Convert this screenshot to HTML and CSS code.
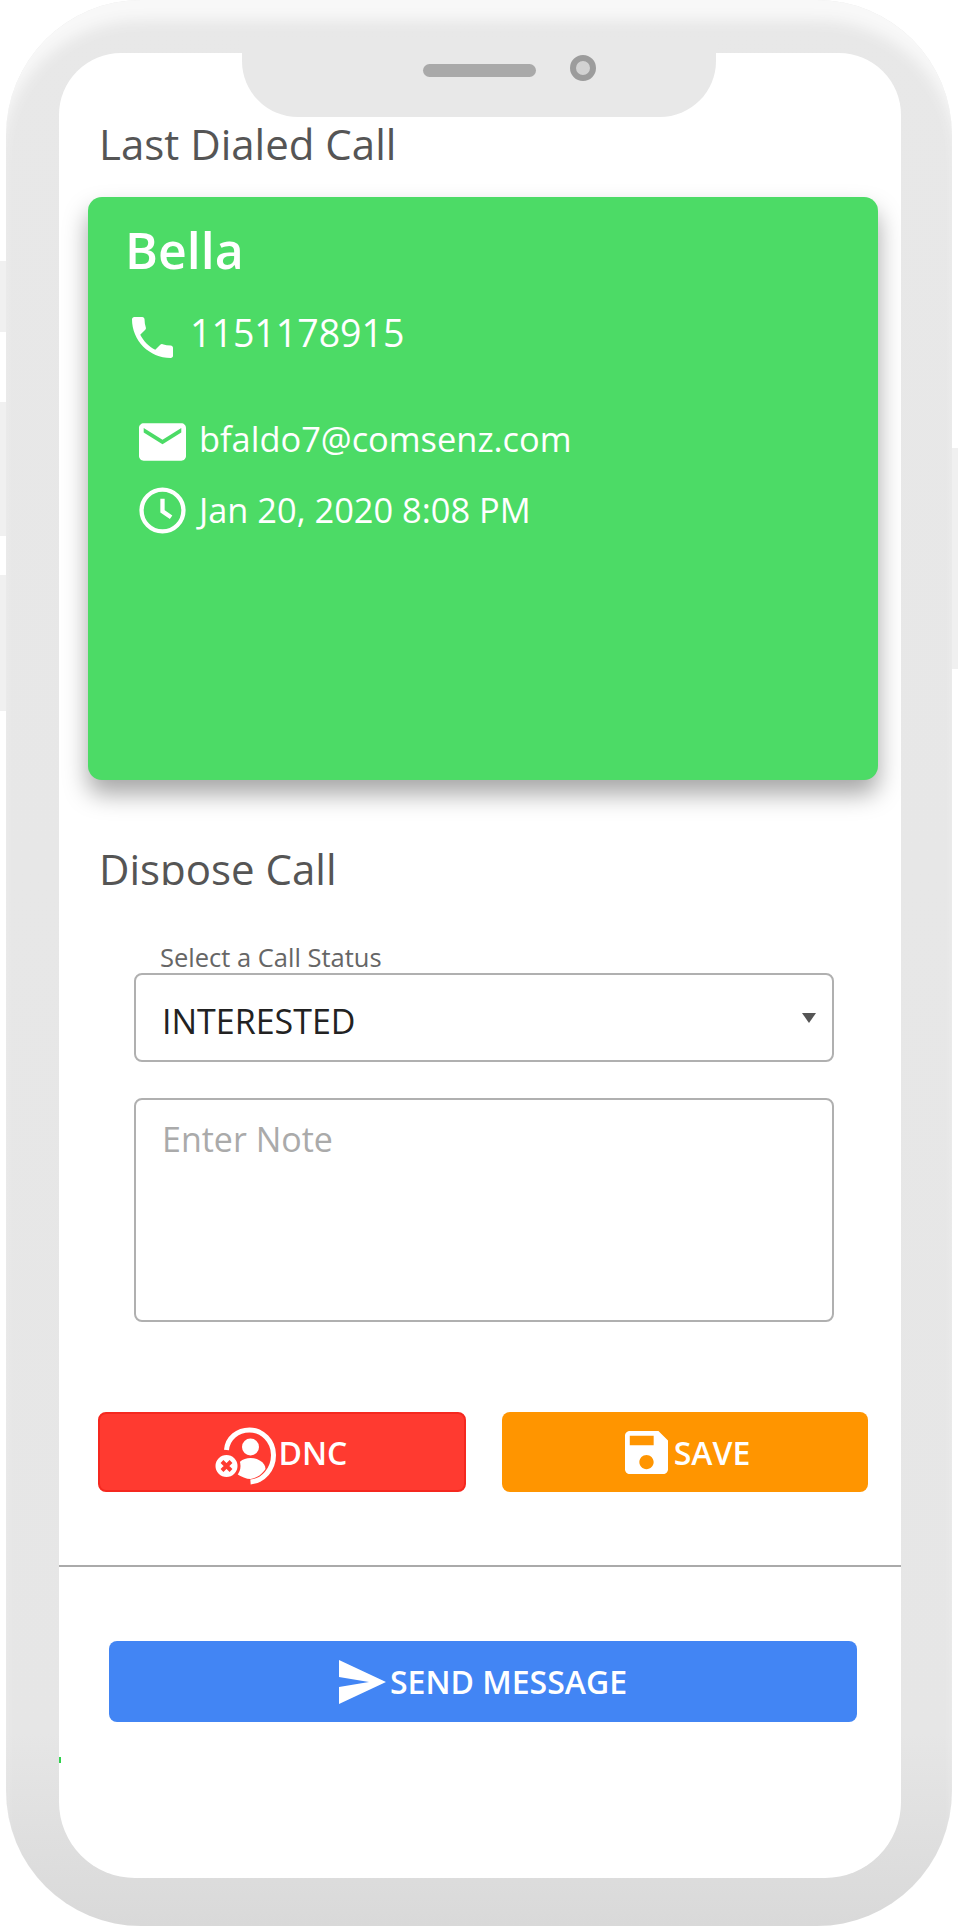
FILE: index.html
```html
<!DOCTYPE html>
<html>
<head>
    <title>Last Dialed Call</title>
    <link rel="stylesheet" href="styles.css">
</head>
<body>
    <div class="phone">
        <span class="side-key key-one"></span>
        <span class="side-key key-two"></span>
        <span class="side-key key-three"></span>
        <span class="side-key key-right"></span>

        <div class="notch">
            <span class="speaker"></span>
            <span class="camera"></span>
        </div>

        <span class="screen-speck"></span>

        <div class="screen">
            <h2 class="section-title">Last Dialed Call</h2>

            <div class="call-card">
                <h3 class="lead-name">Bella</h3>
                <div class="lead-phone">
                    <svg class="icon-phone" viewBox="3 3 18 18"><path d="M6.62 10.79c1.44 2.83 3.76 5.14 6.59 6.59l2.2-2.2c.27-.27.67-.36 1.02-.24 1.12.37 2.33.57 3.57.57.55 0 1 .45 1 1V20c0 .55-.45 1-1 1-9.39 0-17-7.61-17-17 0-.55.45-1 1-1h3.5c.55 0 1 .45 1 1 0 1.25.2 2.45.57 3.57.11.35.03.74-.25 1.02l-2.2 2.2z"/></svg>
                    <span>1151178915</span>
                </div>
                <div class="lead-line lead-email">
                    <svg class="icon-mail" viewBox="2 4 20 16"><path d="M20 4H4c-1.1 0-2 .9-2 2v12c0 1.1.9 2 2 2h16c1.1 0 2-.9 2-2V6c0-1.1-.9-2-2-2zm0 4l-8 5-8-5V6l8 5 8-5v2z"/></svg>
                    <span>bfaldo7@comsenz.com</span>
                </div>
                <div class="lead-line lead-date">
                    <svg class="icon-clock" viewBox="0 0 24 24"><circle cx="12" cy="12" r="10.7"/><path d="M12 6v6.4l4.4 3"/></svg>
                    <span>Jan 20, 2020 8:08 PM</span>
                </div>
            </div>

            <h2 class="section-title dispose-title">Dispose Call</h2>

            <form class="dispose-form">
                <label class="status-label" for="status">Select a Call Status</label>
                <div class="select-wrap">
                    <select id="status" class="status-select">
                        <option>INTERESTED</option>
                    </select>
                </div>
                <textarea class="note-box" placeholder="Enter Note"></textarea>
            </form>

            <div class="action-row">
                <button class="btn btn-dnc">
                    <svg class="icon-dnc" viewBox="0 0 64 58">
                        <path class="dnc-ring" d="M14 23C15 11 25 3 37 3c13 0 24 11 24 25S51 54 38 55"/>
                        <circle cx="38" cy="20" r="8.5"/>
                        <path d="M23 46c0-10 7-15 15-15s15 5 15 11c-4 6-9 9-15 10-4 0-9-2-15-6z"/>
                        <circle class="dnc-badge" cx="14" cy="39" r="12.5"/>
                        <path class="dnc-x" d="M9.5 34.5l9 9m0-9l-9 9"/>
                    </svg>
                    <span>DNC</span>
                </button>
                <button class="btn btn-save">
                    <svg class="icon-save" viewBox="3 3 18 18"><path d="M17 3H5c-1.11 0-2 .9-2 2v14c0 1.1.89 2 2 2h14c1.1 0 2-.9 2-2V7l-4-4zm-5 16c-1.66 0-3-1.34-3-3s1.34-3 3-3 3 1.34 3 3-1.34 3-3 3zm3-10H5V5h10v4z"/></svg>
                    <span>SAVE</span>
                </button>
            </div>

            <hr class="divider">

            <button class="btn btn-send">
                <svg class="icon-send" viewBox="0 0 47 44"><path d="M0 0L47 22 0 44V27L30 22 0 17z"/></svg>
                <span>SEND MESSAGE</span>
            </button>
        </div>
    </div>
</body>
</html>
```

FILE: styles.css
```css
* {
    box-sizing: border-box;
}

body {
    margin: 0;
    background-color: white;
    font-family: "Open Sans", "Noto Sans", sans-serif;
}

.phone {
    position: relative;
    width: 946px;
    height: 1926px;
    margin-left: 6px;
    padding: 53px 51px 48px 53px;
    border-radius: 135px;
    background: linear-gradient(#e8e8e8, #e6e6e6 90%, #d9d9d9);
    box-shadow: inset 0 26px 14px -6px #f8f8f8;
    filter: blur(0.5px);
}

.side-key {
    position: absolute;
    left: -6px;
    width: 6px;
    background-color: #f0f0f0;
}

.key-one {
    top: 261px;
    height: 71px;
}

.key-two {
    top: 402px;
    height: 134px;
}

.key-three {
    top: 575px;
    height: 136px;
}

.key-right {
    top: 448px;
    left: 946px;
    height: 221px;
}

.notch {
    position: absolute;
    top: 40px;
    left: 236px;
    width: 474px;
    height: 77px;
    border-radius: 0 0 56px 56px;
    background-color: #e8e8e8;
}

.speaker {
    position: absolute;
    top: 24px;
    left: 181px;
    width: 113px;
    height: 13px;
    border-radius: 7px;
    background-color: #a9a9a9;
}

.camera {
    position: absolute;
    top: 15px;
    left: 328px;
    width: 26px;
    height: 26px;
    border: 6px solid #9c9c9c;
    border-radius: 50%;
    background-color: #d2d2d2;
}

.screen-speck {
    position: absolute;
    top: 1757px;
    left: 53px;
    width: 2px;
    height: 6px;
    background-color: #2fd24c;
}

.screen {
    height: 100%;
    padding-top: 66px;
    overflow: hidden;
    border-radius: 62px 62px 76px 76px;
    background-color: white;
}

.section-title {
    margin: 0 0 0 40px;
    color: #555;
    font-size: 42px;
    font-weight: 400;
    line-height: 50px;
}

.call-card {
    width: 790px;
    height: 583px;
    margin: 28px 0 0 29px;
    padding: 22px 37px;
    border-radius: 14px;
    background-color: #4cdb66;
    box-shadow: 0 14px 24px rgba(0, 0, 0, 0.35);
    color: white;
}

.lead-name {
    margin: 0;
    font-size: 50px;
    font-weight: 600;
    line-height: 62px;
}

.lead-phone {
    display: flex;
    align-items: center;
    gap: 16px;
    margin-top: 26px;
    font-size: 37.5px;
    line-height: 52px;
}

.icon-phone {
    width: 43px;
    height: 41px;
    margin: 8px 0 0 6px;
    fill: white;
}

.lead-line {
    display: flex;
    align-items: center;
    gap: 13px;
    margin-left: 14px;
    font-size: 34.4px;
    line-height: 44px;
}

.lead-email {
    margin-top: 58px;
}

.lead-date {
    margin-top: 24px;
}

.icon-mail {
    width: 47px;
    height: 38px;
    margin-top: 6px;
    fill: white;
}

.icon-clock {
    width: 47px;
    height: 47px;
    margin-top: 2px;
    fill: none;
    stroke: white;
    stroke-width: 2.2;
}

.dispose-title {
    height: 41px;
    margin-top: 64px;
    overflow: hidden;
}

.dispose-form {
    margin: 61px 0 0 75px;
    width: 700px;
}

.status-label {
    display: block;
    height: 27px;
    margin-left: 26px;
    color: #666;
    font-size: 25.5px;
    line-height: 22px;
}

.select-wrap {
    position: relative;
}

.select-wrap::after {
    content: "";
    position: absolute;
    top: 40px;
    right: 18px;
    border: 7px solid transparent;
    border-top: 10px solid #555;
    border-bottom: none;
}

.status-select {
    display: block;
    width: 100%;
    height: 89px;
    padding: 6px 0 0 26px;
    border: 2px solid #b0b0b0;
    border-radius: 8px;
    appearance: none;
    background-color: white;
    color: #222;
    font-family: inherit;
    font-size: 34px;
}

.note-box {
    display: block;
    width: 100%;
    height: 224px;
    margin-top: 36px;
    padding: 16px 26px;
    border: 2px solid #b0b0b0;
    border-radius: 8px;
    resize: none;
    font-family: inherit;
    font-size: 34px;
}

.note-box::placeholder {
    color: #aaa;
}

.btn {
    display: flex;
    align-items: center;
    justify-content: center;
    border: 2px solid transparent;
    border-radius: 8px;
    color: white;
    font-family: inherit;
    font-size: 32px;
    font-weight: 600;
}

.action-row {
    display: grid;
    grid-template-columns: 368px 366px;
    gap: 36px;
    width: 770px;
    margin: 90px 0 0 39px;
}

.action-row .btn {
    height: 80px;
}

.btn-dnc {
    padding-right: 11px;
    background-color: #ff3a30;
    border-color: #f5281f;
}

.btn-save {
    padding-left: 11px;
    background-color: #ff9500;
}

.btn-dnc svg {
    margin-right: 2px;
}

.icon-dnc {
    width: 65px;
    height: 58px;
    margin-top: 8px;
    fill: white;
}

.dnc-ring {
    fill: none;
    stroke: white;
    stroke-width: 5;
}

.dnc-badge {
    stroke: #ff3a30;
    stroke-width: 3;
}

.dnc-x {
    fill: none;
    stroke: #ff3a30;
    stroke-width: 4;
}

.icon-save {
    width: 43px;
    height: 43px;
    margin-right: 6px;
    fill: white;
}

.divider {
    height: 2px;
    margin: 73px 0 0;
    border: none;
    background-color: #aaa;
}

.btn-send {
    width: 748px;
    height: 81px;
    margin: 74px 0 0 50px;
    background-color: #4285f4;
}

.icon-send {
    width: 47px;
    height: 44px;
    margin-right: 4px;
    fill: white;
}
```
